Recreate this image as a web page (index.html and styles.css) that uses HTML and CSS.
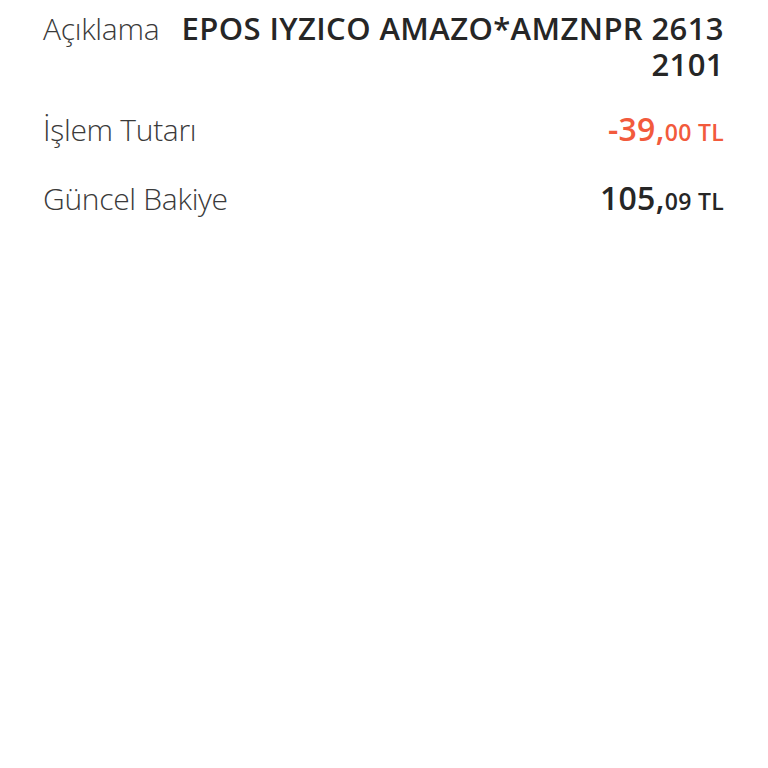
FILE: index.html
```html
<!DOCTYPE html>
<html lang="tr">
<head>
<meta charset="utf-8">
<title>İşlem Detayı</title>
<link rel="stylesheet" href="styles.css">
</head>
<body>
<main class="details">
  <div class="row row-desc">
    <span class="label">Açıklama</span>
    <span class="value">EPOS IYZICO AMAZO*AMZNPR 2613 2101</span>
  </div>
  <div class="row row-amount">
    <span class="label">İşlem Tutarı</span>
    <span class="value amount negative"><span class="int">-39,</span><span class="dec">00 TL</span></span>
  </div>
  <div class="row row-balance">
    <span class="label">Güncel Bakiye</span>
    <span class="value amount"><span class="int">105,</span><span class="dec">09 TL</span></span>
  </div>
</main>
</body>
</html>
```

FILE: styles.css
```css
html, body {
  margin: 0;
  padding: 0;
  background: #ffffff;
}

body {
  font-family: "Open Sans", "Noto Sans", sans-serif;
  color: #2b2b2b;
  width: 768px;
  height: 768px;
}

.details {
  padding: 10px 44px 0 43px;
  display: flex;
  flex-direction: column;
}

.row {
  display: flex;
  align-items: baseline;
  gap: 22px;
  line-height: 36px;
}

.row-desc {
  margin-bottom: 29px;
}

.row-amount {
  margin-bottom: 30px;
}

.label {
  flex: none;
  font-size: 30px;
  font-weight: 300;
  color: #3a3a3a;
  letter-spacing: -0.3px;
}

.value {
  flex: 1;
  text-align: right;
  font-size: 31px;
  font-weight: 600;
  color: #262626;
  letter-spacing: 0.4px;
}

.amount .int {
  font-size: 32px;
  letter-spacing: 0.3px;
}

.amount .dec {
  font-size: 23px;
  letter-spacing: 0.3px;
}

.negative {
  color: #f25a3c;
}
```
